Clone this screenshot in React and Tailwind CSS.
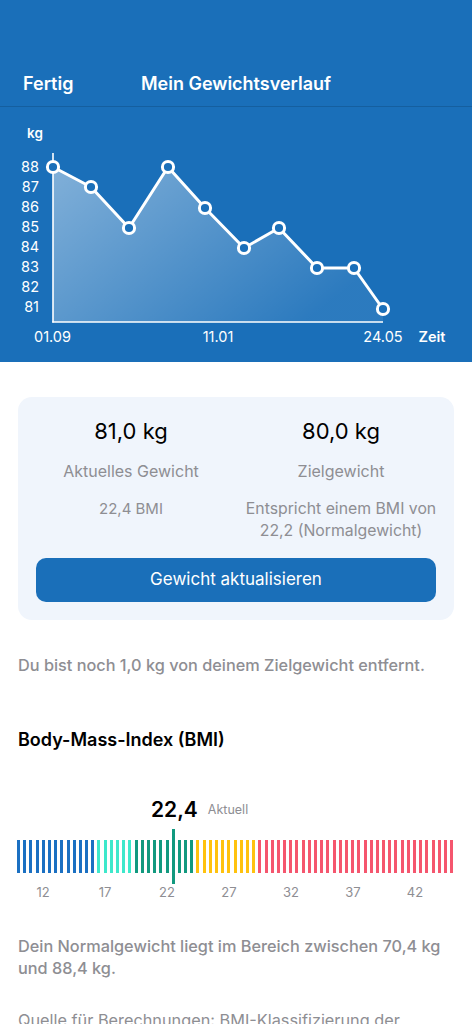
import React from "react";

const pts = [
  [53, 167], [91, 187], [129, 228], [168, 167], [205, 208],
  [244, 248], [279, 228], [317, 268], [354, 268], [383, 309],
];

function Chart() {
  const line = pts.map((p) => p.join(",")).join(" ");
  const area = `53,322 ${line} 383,322`;
  const yl = [88, 87, 86, 85, 84, 83, 82, 81];
  return (
    <svg width="472" height="255" viewBox="0 107 472 255" className="block">
      <defs>
        <linearGradient id="fillg" x1="0" y1="0" x2="1" y2="0.6">
          <stop offset="0" stopColor="#ffffff" stopOpacity="0.45" />
          <stop offset="1" stopColor="#ffffff" stopOpacity="0.08" />
        </linearGradient>
      </defs>
      <text x="27" y="133" fill="#fff" fontSize="13.5" fontWeight="600" dominantBaseline="central" fontFamily="Inter, sans-serif">kg</text>
      {yl.map((v, i) => (
        <text key={v} x="39" y={166 + i * 20.1} fill="#fff" fontSize="14.5" textAnchor="end" dominantBaseline="central" fontFamily="Inter, sans-serif">{v}</text>
      ))}
      <polygon points={area} fill="url(#fillg)" />
      <line x1="53" y1="153" x2="53" y2="322.5" stroke="#fff" strokeWidth="1.6" />
      <line x1="52.2" y1="322" x2="383" y2="322" stroke="#fff" strokeWidth="1.6" />
      <polyline points={line} fill="none" stroke="#fff" strokeWidth="3" strokeLinejoin="round" />
      {pts.map(([x, y], i) => (
        <circle key={i} cx={x} cy={y} r="5.6" fill="#1a6fb9" stroke="#fff" strokeWidth="3" />
      ))}
      <text x="52.5" y="336.5" fill="#fff" fontSize="14.5" textAnchor="middle" dominantBaseline="central" fontFamily="Inter, sans-serif">01.09</text>
      <text x="218" y="336.5" fill="#fff" fontSize="14.5" textAnchor="middle" dominantBaseline="central" fontFamily="Inter, sans-serif">11.01</text>
      <text x="383" y="336.5" fill="#fff" fontSize="14.5" textAnchor="middle" dominantBaseline="central" fontFamily="Inter, sans-serif">24.05</text>
      <text x="432" y="336.5" fill="#fff" fontSize="14.5" fontWeight="600" textAnchor="middle" dominantBaseline="central" fontFamily="Inter, sans-serif">Zeit</text>
    </svg>
  );
}

function barColor(i) {
  if (i <= 12) return "bg-[#1b70c2]";
  if (i <= 18) return "bg-[#3ee8cb]";
  if (i <= 28) return "bg-[#12997f]";
  if (i <= 38) return "bg-[#ffc20e]";
  return "bg-[#f5566e]";
}

function BmiScale() {
  const bars = Array.from({ length: 71 }, (_, i) => i);
  const labels = [12, 17, 22, 27, 32, 37, 42];
  return (
    <div>
      <div className="flex items-center h-[26px] pl-[151px] gap-[10px]">
        <span className="text-[21px] font-semibold text-black leading-[26px]">22,4</span>
        <span className="text-[12.5px] text-[#8e8e93] leading-[16px]">Aktuell</span>
      </div>
      <div className="mt-[6px] ml-[17px] w-[437px] h-[55px] flex items-center justify-between">
        {bars.map((i) =>
          i === 25 ? (
            <div key={i} className="w-[3px] h-[55px] bg-[#12997f]" />
          ) : (
            <div key={i} className={`w-[3px] h-[33px] ${barColor(i)}`} />
          )
        )}
      </div>
      <div className="ml-[12px] flex">
        {labels.map((l) => (
          <div key={l} className="w-[62px] text-center text-[13px] leading-[16px] text-[#8e8e93]">{l}</div>
        ))}
      </div>
    </div>
  );
}

export default function App() {
  return (
    <div className="w-[472px] min-h-[1024px] bg-white overflow-hidden" style={{ fontFamily: "Inter, 'Noto Sans', sans-serif" }}>
      <div className="bg-[#1a6fb9]">
        <div className="h-[60px]" />
        <div className="h-[47px] grid grid-cols-[1fr_auto_1fr] items-center px-[23px] border-b border-[#155f9f]">
          <span className="text-white text-[18px] font-semibold">Fertig</span>
          <span className="text-white text-[18px] font-semibold">Mein Gewichtsverlauf</span>
          <span />
        </div>
        <Chart />
      </div>

      <div className="mx-[18px] mt-[35px] rounded-[14px] bg-[#f0f5fc] px-[8px] pt-[20px] pb-[18px]">
        <div className="grid grid-cols-2 text-center">
          <div>
            <div className="text-[22px] leading-[28px] text-black">81,0 kg</div>
            <div className="mt-[15px] text-[16px] leading-[22px] text-[#8e8e93]">Aktuelles Gewicht</div>
            <div className="mt-[16px] text-[15px] leading-[22px] text-[#8e8e93]">22,4 BMI</div>
          </div>
          <div>
            <div className="text-[22px] leading-[28px] text-black">80,0 kg</div>
            <div className="mt-[15px] text-[16px] leading-[22px] text-[#8e8e93]">Zielgewicht</div>
            <div className="mt-[16px] text-[15.8px] leading-[22px] text-[#8e8e93] whitespace-nowrap">Entspricht einem BMI von<br />22,2 (Normalgewicht)</div>
          </div>
        </div>
        <div className="mx-[10px] mt-[16px] h-[44px] rounded-[10px] bg-[#1a6fb9] flex items-center justify-center text-white text-[17px]">
          Gewicht aktualisieren
        </div>
      </div>

      <div className="px-[18px] mt-[34px] text-[16.3px] leading-[22px] font-medium text-[#8e8e93] whitespace-nowrap">
        Du bist noch 1,0 kg von deinem Zielgewicht entfernt.
      </div>

      <div className="px-[18px] mt-[52px] text-[18px] leading-[24px] font-semibold text-black">
        Body-Mass-Index (BMI)
      </div>

      <div className="mt-[45px]">
        <BmiScale />
      </div>

      <div className="px-[18px] mt-[35px] text-[16.3px] leading-[22px] font-medium text-[#8e8e93] whitespace-nowrap">
        Dein Normalgewicht liegt im Bereich zwischen 70,4 kg<br />und 88,4 kg.
      </div>

      <div className="px-[18px] mt-[30px] text-[16.3px] leading-[22px] text-[#8e8e93] whitespace-nowrap">
        Quelle für Berechnungen: BMI-Klassifizierung der
      </div>
    </div>
  );
}
